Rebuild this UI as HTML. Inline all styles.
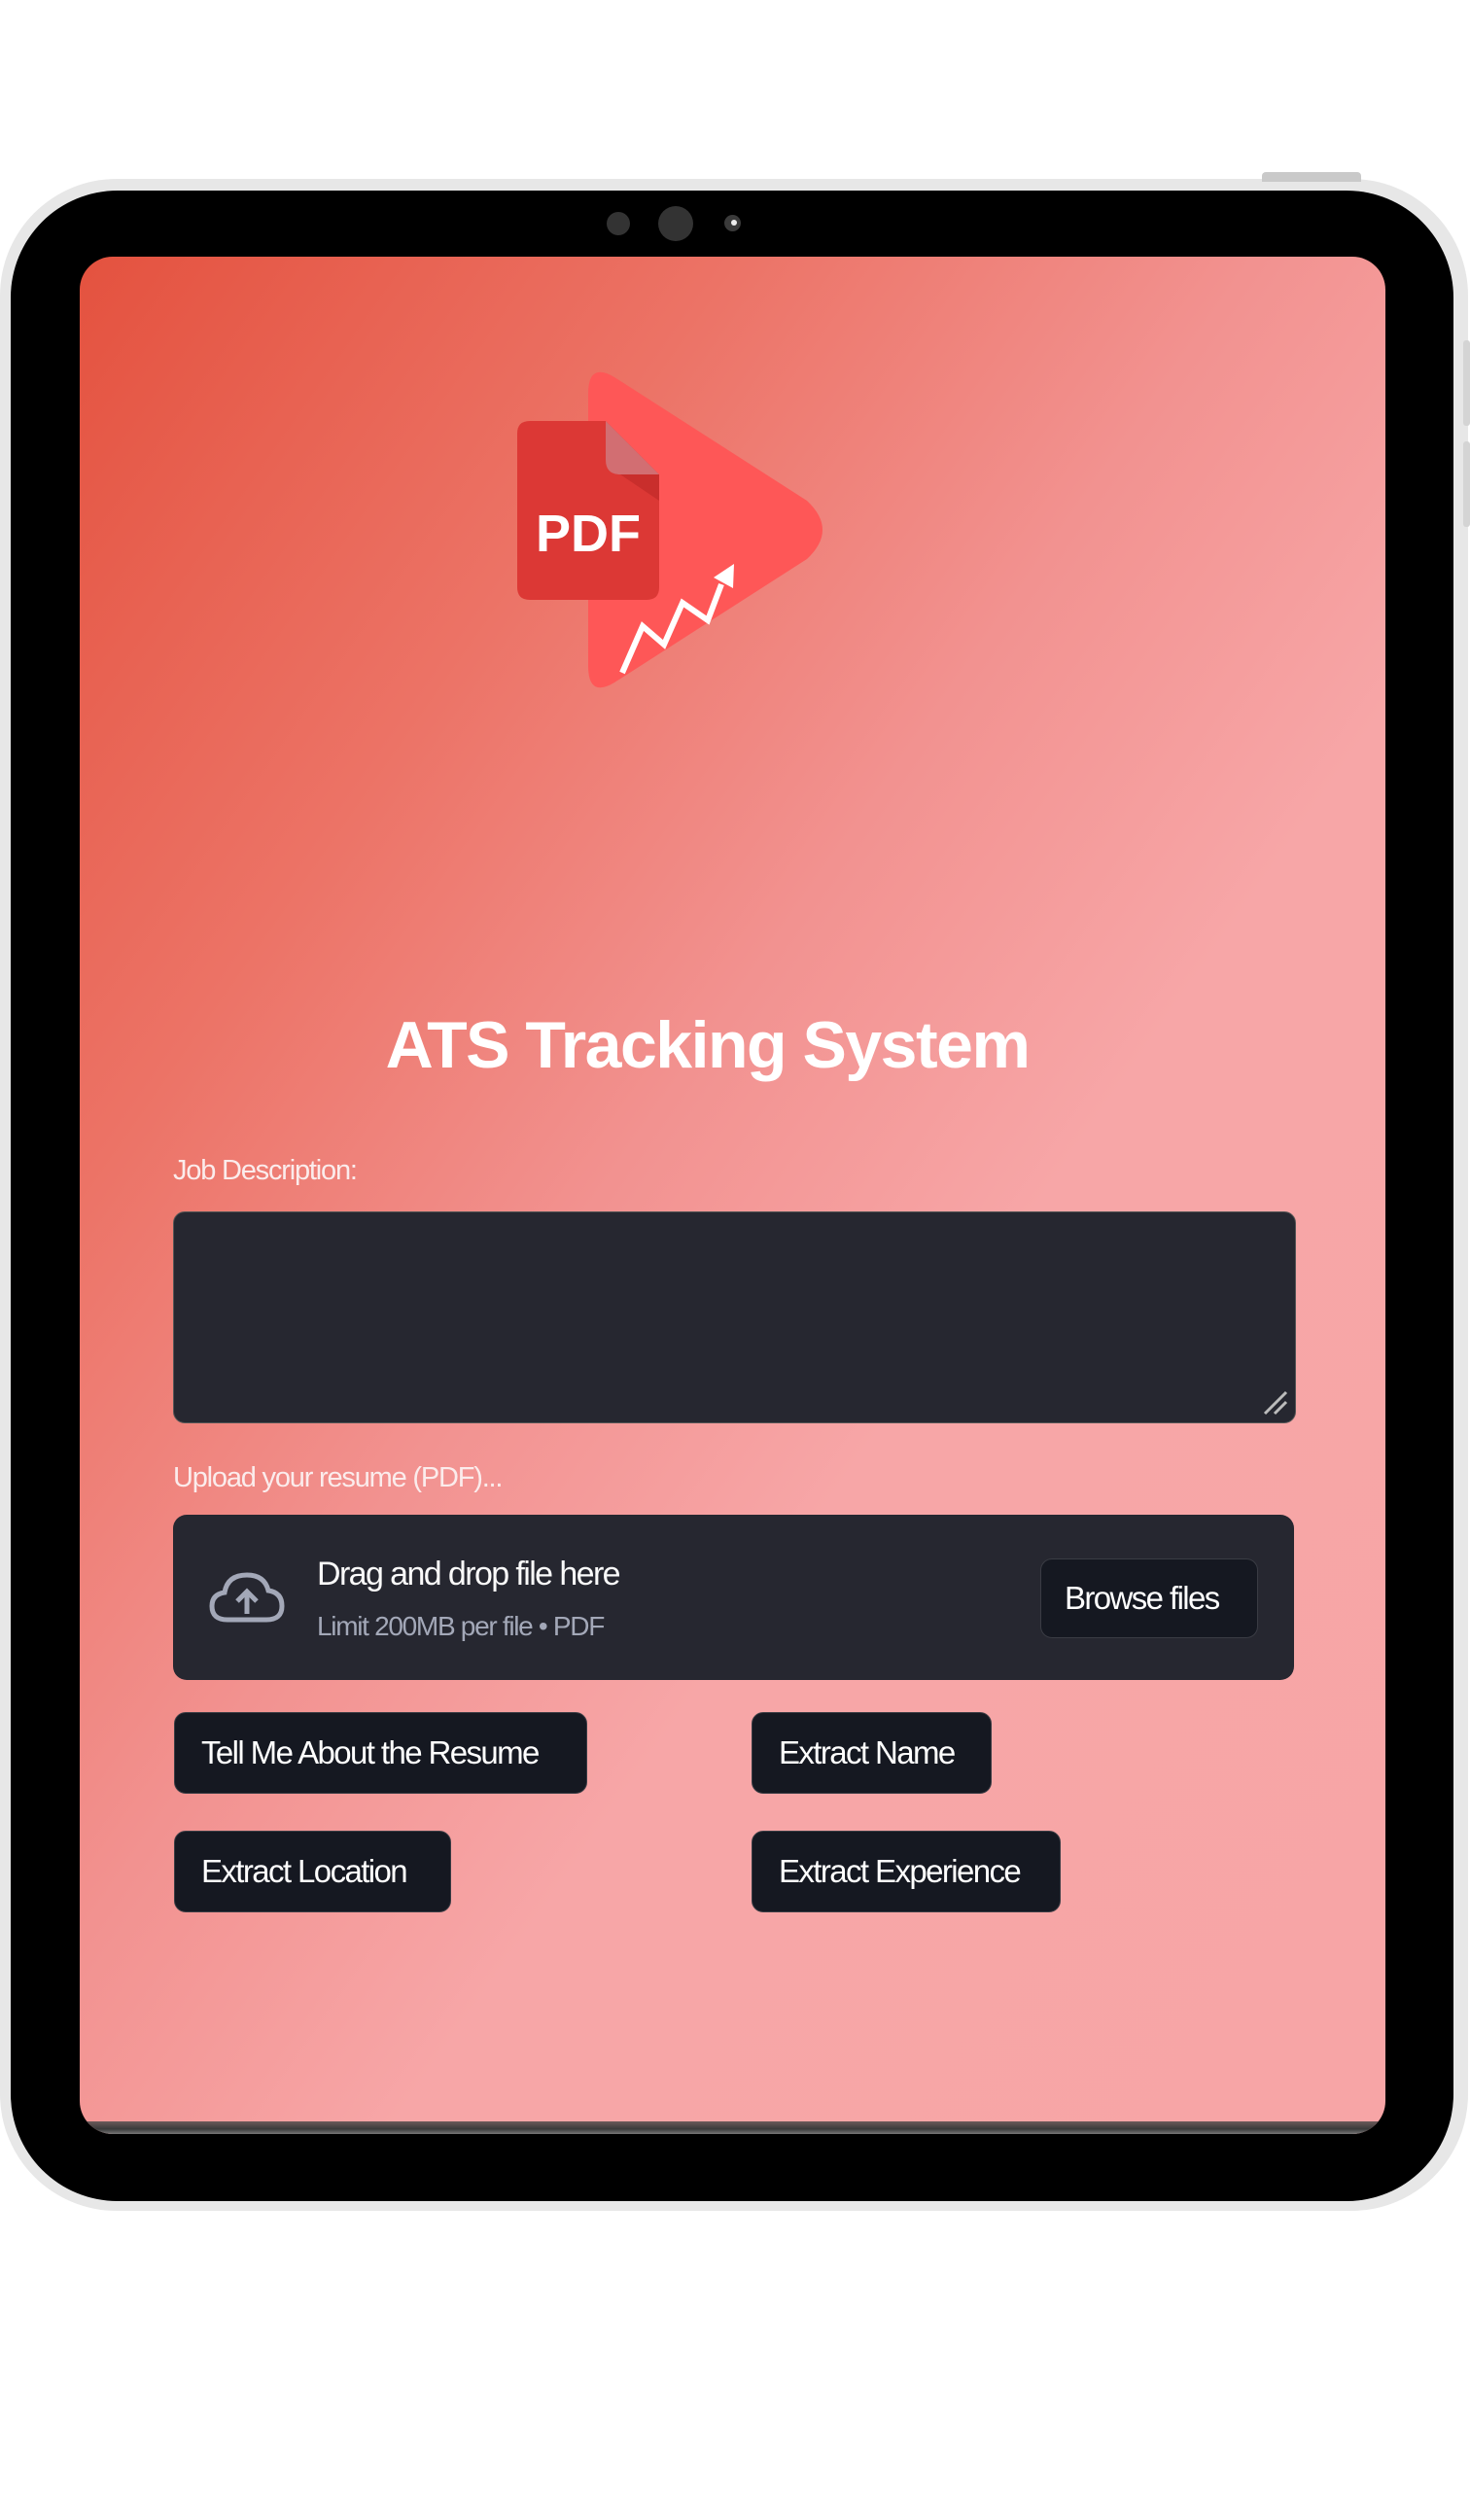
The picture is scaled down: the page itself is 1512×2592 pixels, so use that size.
<!DOCTYPE html>
<html><head><meta charset="utf-8"><style>
html,body{margin:0;padding:0;background:#fff;}
body{width:1512px;height:2592px;position:relative;overflow:hidden;font-family:"Liberation Sans",sans-serif;}
.abs{position:absolute;}
.outer{left:0;top:184px;width:1510px;height:2090px;background:#e7e7e7;border-radius:120px;}
.frame{left:11px;top:196px;width:1484px;height:2068px;background:#000;border-radius:110px;}
.screen{left:82px;top:264px;width:1343px;height:1931px;border-radius:34px;overflow:hidden;
background:linear-gradient(125deg,#e4523f 0%,#ec7366 25%,#f29290 45%,#f7a6a7 62%,#f7a5a6 100%);}
.strip{left:0;bottom:0;width:100%;height:13px;background:linear-gradient(#6b5a5a,#3b3b3b 60%,#777);}
.lbl{color:#fbecec;font-size:29px;letter-spacing:-1.2px;}
.btn{background:#151821;color:#fff;border:1px solid #3a3c44;border-radius:12px;font-size:33px;letter-spacing:-1.6px;display:flex;align-items:center;padding-left:27px;box-sizing:border-box;white-space:nowrap;}
</style></head><body>
<div class="abs outer"></div>
<div class="abs" style="left:1298px;top:177px;width:102px;height:10px;background:#c9c9c9;border-radius:4px 4px 0 0"></div>
<div class="abs" style="left:1505px;top:350px;width:7px;height:88px;background:#d4d4d4;border-radius:3px"></div>
<div class="abs" style="left:1505px;top:454px;width:7px;height:88px;background:#d4d4d4;border-radius:3px"></div>
<div class="abs frame"></div>
<div class="abs" style="left:624px;top:218px;width:24px;height:24px;border-radius:50%;background:#333"></div>
<div class="abs" style="left:677px;top:212px;width:36px;height:36px;border-radius:50%;background:#333"></div>
<div class="abs" style="left:745px;top:221px;width:17px;height:17px;border-radius:50%;background:#3a3a3a"></div>
<div class="abs" style="left:752px;top:226px;width:6px;height:6px;border-radius:50%;background:#eee"></div>
<div class="abs screen">
  <svg class="abs" style="left:0;top:0" width="1343" height="500" viewBox="82 264 1343 500">
    <path d="M605 405 Q605 372 632 388 L830 515 Q862 545 830 575 L632 702 Q605 718 605 685 Z" fill="#fe5757"/>
    <path d="M545 433 L623 433 L678 488 L678 604 Q678 617 665 617 L545 617 Q532 617 532 604 L532 446 Q532 433 545 433 Z" fill="#dc3835"/>
    <path d="M623 433 L623 473 Q623 488 638 488 L678 488 Z" fill="#d26e72"/>
    <path d="M638 488 L678 488 L678 515 Z" fill="#c92e2c"/>
    <text x="605" y="567" text-anchor="middle" font-family="Liberation Sans" font-weight="bold" font-size="54" fill="#fff">PDF</text>
    <path d="M640 692 L661 644 L683 663 L702 620 L728 638 L742 601" fill="none" stroke="#fff" stroke-width="6" stroke-linejoin="miter"/>
    <path d="M734 594 L755 580 L754 605 Z" fill="#fff"/>
  </svg>
  <div class="abs" style="left:0;width:1291px;top:772px;text-align:center;">
    <span style="display:inline-block;color:#fff;font-weight:bold;font-size:68px;letter-spacing:-1.5px;">ATS Tracking System</span>
  </div>
  <div class="abs lbl" style="left:96px;top:924px">Job Description:</div>
  <div class="abs" style="left:96px;top:982px;width:1153px;height:216px;background:#262730;border-radius:12px;border:1px solid #555"></div>
  <svg class="abs" style="left:1215px;top:1164px" width="30" height="30"><path d="M4 26 L26 4 M14 26 L26 14" stroke="#bbb" stroke-width="3"/></svg>
  <div class="abs lbl" style="left:96px;top:1240px">Upload your resume (PDF)...</div>
  <div class="abs" style="left:96px;top:1294px;width:1153px;height:170px;background:#262730;border-radius:14px"></div>
  <svg class="abs" style="left:132px;top:1350px" width="80" height="60" viewBox="0 0 80 60">
    <path d="M20 52 Q4 52 4 38 Q4 26 17 24 Q20 6 40 6 Q58 6 62 22 Q76 24 76 38 Q76 52 60 52 Z" fill="none" stroke="#a3a8b8" stroke-width="5"/>
    <path d="M40 46 L40 24 M30 33 L40 23 L50 33" fill="none" stroke="#a3a8b8" stroke-width="5"/>
  </svg>
  <div class="abs" style="left:244px;top:1336px;color:#fafafa;font-size:34px;letter-spacing:-1.6px">Drag and drop file here</div>
  <div class="abs" style="left:244px;top:1393px;color:#a3a8b8;font-size:28px;letter-spacing:-1.3px">Limit 200MB per file • PDF</div>
  <div class="abs btn" style="left:988px;top:1339px;width:224px;height:82px;padding-left:24px">Browse files</div>
  <div class="abs btn" style="left:97px;top:1497px;width:425px;height:84px">Tell Me About the Resume</div>
  <div class="abs btn" style="left:691px;top:1497px;width:247px;height:84px">Extract Name</div>
  <div class="abs btn" style="left:97px;top:1619px;width:285px;height:84px">Extract Location</div>
  <div class="abs btn" style="left:691px;top:1619px;width:318px;height:84px">Extract Experience</div>
  <div class="abs strip"></div>
</div>
</body></html>
